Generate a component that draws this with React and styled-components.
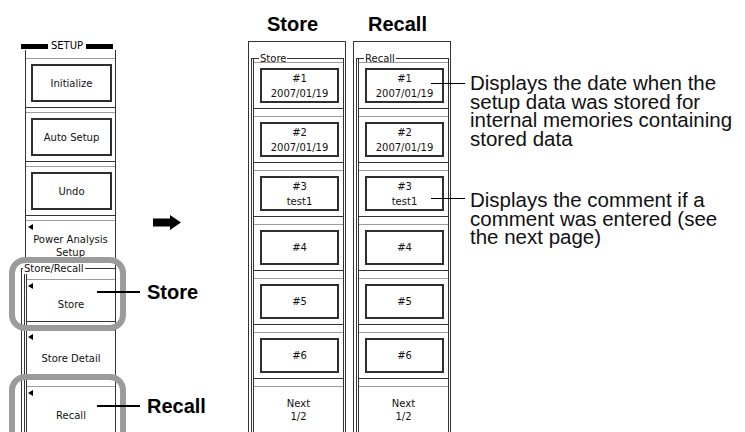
import React from 'react';
import styled, { createGlobalStyle } from 'styled-components';

const UI_FONT = `"DejaVu Sans", "Liberation Sans", sans-serif`;
const DOC_FONT = `"Liberation Sans", Arial, sans-serif`;

const GlobalStyle = createGlobalStyle`
  html, body { margin: 0; padding: 0; background: #fff; }
  body { font-family: ${DOC_FONT}; color: #111; }
`;

const Page = styled.div`
  position: relative;
  width: 745px;
  height: 432px;
  overflow: hidden;
  display: flex;
  align-items: flex-start;
  background: #fff;
`;

/* ---------- SETUP soft-key panel ---------- */
const SetupPanel = styled.div`
  margin: 42px 0 0 20px;
  width: 96px;
  display: flex;
  flex-direction: column;
  font-family: ${UI_FONT};
`;

const PanelHeader = styled.div`
  display: flex;
  align-items: center;
  height: 8px;
  margin: 0 3px 0 1px;
  font-size: 10px;
  line-height: 8px;
  color: #000;
`;

const HeaderBar = styled.span`
  flex: 1;
  height: 5px;
  background: #000;
`;

const HeaderText = styled.span`
  padding: 0 3px;
`;

const SetupBody = styled.div`
  height: 382px;
  box-sizing: border-box;
  border-right: 1px solid #333;
  padding-left: 1px;
  display: flex;
  flex-direction: column;
`;

const KeyList = styled.div`
  display: flex;
  flex-direction: column;
  gap: ${p => p.$gap}px;
  padding-top: ${p => p.$top}px;
  margin-left: ${p => p.$ml}px;
  border-left: ${p => (p.$double ? '3px double #333' : '1px solid #333')};
`;

const Group = styled.div`
  position: relative;
  margin-top: ${p => p.$mt || 0}px;
  border-top: 1px solid #333;
  border-left: 1px solid #333;
  border-right: ${p => (p.$closed ? '1px solid #333' : 'none')};
  padding-left: ${p => p.$pl}px;
  padding-top: ${p => p.$pt}px;
  flex: 1;
`;

const GroupLabel = styled.span`
  position: absolute;
  top: -6px;
  left: ${p => p.$left}px;
  padding: 0 1px;
  background: #fff;
  font-family: ${UI_FONT};
  font-size: 10px;
  line-height: 11px;
  color: #111;
`;

const Key = styled.div`
  position: relative;
  box-sizing: border-box;
  height: ${p => p.$h}px;
  flex-shrink: 0;
  border-top: 1px solid #9c9c9c;
  border-bottom: 1px solid #333;
  padding: ${p => p.$pad || '0'};
  display: flex;
  flex-direction: column;
  background: #fff;
`;

const KeyBox = styled.div`
  flex: 1;
  border: 2px solid #2e2e2e;
  display: flex;
  flex-direction: column;
  align-items: center;
  justify-content: center;
  font-size: 10px;
  line-height: 15px;
  color: #111;
  text-align: center;
`;

const KeyLabel = styled.div`
  flex: 1;
  display: flex;
  flex-direction: column;
  align-items: center;
  justify-content: center;
  padding-top: ${p => p.$drop || 0}px;
  font-size: 10px;
  line-height: 13px;
  color: #111;
  text-align: center;
`;

const Pointer = styled.span`
  position: absolute;
  top: 3px;
  left: ${p => p.$left || 2}px;
  width: 0;
  height: 0;
  border-top: 3px solid transparent;
  border-bottom: 3px solid transparent;
  border-right: 5px solid #000;
`;

/* ---------- arrow ---------- */
const ArrowSlot = styled.div`
  width: 132px;
  box-sizing: border-box;
  padding: 215px 0 0 37px;
  display: flex;
`;

/* ---------- Store / Recall menus ---------- */
const MenuColumn = styled.div`
  width: 98px;
  margin-left: ${p => p.$ml || 0}px;
  display: flex;
  flex-direction: column;
`;

const MenuTitle = styled.div`
  height: 41px;
  box-sizing: border-box;
  padding: 13px 9px 0 0;
  text-align: center;
  font-family: ${DOC_FONT};
  font-weight: bold;
  font-size: 20px;
  line-height: 22px;
  color: #000;
`;

const MenuPanel = styled.div`
  height: 391px;
  box-sizing: border-box;
  border: 1px solid #333;
  border-bottom: none;
  padding: 16px 1px 0 2px;
  display: flex;
  flex-direction: column;
  font-family: ${UI_FONT};
`;

/* ---------- notes ---------- */
const Notes = styled.div`
  flex: 1;
  padding: 74px 0 0 19px;
  display: flex;
  flex-direction: column;
  gap: 43px;
  font-family: ${DOC_FONT};
  font-size: 20.5px;
  line-height: 18.5px;
  color: #111;
`;

const Note = styled.p`
  position: relative;
  margin: 0;
  white-space: nowrap;
  &::before {
    content: '';
    position: absolute;
    left: -39px;
    top: ${p => p.$lead}px;
    width: 34px;
    height: 1px;
    background: #000;
  }
`;

/* ---------- overlays ---------- */
const Ring = styled.div`
  position: absolute;
  left: 9px;
  top: ${p => p.$top}px;
  width: 117px;
  height: ${p => p.$h}px;
  box-sizing: border-box;
  border: 6px solid #9b9b9b;
  border-radius: 16px;
  pointer-events: none;
`;

const Callout = styled.div`
  position: absolute;
  left: 97px;
  top: ${p => p.$top}px;
  height: 24px;
  display: flex;
  align-items: center;
  font-family: ${DOC_FONT};
  font-weight: bold;
  font-size: 20px;
  line-height: 24px;
  color: #000;
`;

const CalloutRule = styled.span`
  width: 43px;
  height: 1.5px;
  margin-right: 7px;
  background: #000;
`;

const memoryKeys = [
  ['#1', '2007/01/19'],
  ['#2', '2007/01/19'],
  ['#3', 'test1'],
  ['#4'],
  ['#5'],
  ['#6'],
];

function MemoryMenu({ title, label, ml }) {
  return (
    <MenuColumn $ml={ml}>
      <MenuTitle>{title}</MenuTitle>
      <MenuPanel>
        <Group $closed $pl={1} $pt={0}>
          <GroupLabel $left={7}>{label}</GroupLabel>
          <KeyList $gap={7} $top={3} $ml={0}>
            {memoryKeys.map(lines => (
              <Key key={lines[0]} $h={47} $pad="5px 4px 5px 6px">
                <KeyBox>
                  {lines.map(l => (
                    <span key={l}>{l}</span>
                  ))}
                </KeyBox>
              </Key>
            ))}
            <Key $h={47}>
              <KeyLabel>
                <span>Next</span>
                <span>1/2</span>
              </KeyLabel>
            </Key>
          </KeyList>
        </Group>
      </MenuPanel>
    </MenuColumn>
  );
}

export default function App() {
  return (
    <>
      <GlobalStyle />
      <Page>
        <SetupPanel>
          <PanelHeader>
            <HeaderBar />
            <HeaderText>SETUP</HeaderText>
            <HeaderBar />
          </PanelHeader>
          <SetupBody>
            <KeyList $gap={4} $top={8} $ml={4}>
              <Key $h={50} $pad="5px 3px 5px 5px">
                <KeyBox>Initialize</KeyBox>
              </Key>
              <Key $h={50} $pad="5px 3px 5px 5px">
                <KeyBox>Auto Setup</KeyBox>
              </Key>
              <Key $h={50} $pad="5px 3px 5px 5px">
                <KeyBox>Undo</KeyBox>
              </Key>
              <Key $h={43}>
                <Pointer />
                <KeyLabel $drop={8}>
                  <span>Power Analysis</span>
                  <span>Setup</span>
                </KeyLabel>
              </Key>
            </KeyList>
            <Group $mt={5} $pl={2} $pt={0}>
              <GroupLabel $left={1}>Store/Recall</GroupLabel>
              <KeyList $double $gap={8} $top={10} $ml={0}>
                <Key $h={43}>
                  <Pointer $left={1} />
                  <KeyLabel $drop={8}>Store</KeyLabel>
                </Key>
                <Key $h={48}>
                  <Pointer $left={1} />
                  <KeyLabel $drop={8}>Store Detail</KeyLabel>
                </Key>
                <Key $h={52}>
                  <Pointer $left={1} />
                  <KeyLabel $drop={6}>Recall</KeyLabel>
                </Key>
              </KeyList>
            </Group>
          </SetupBody>
        </SetupPanel>

        <ArrowSlot>
          <svg width="28" height="15" viewBox="0 0 28 15" aria-hidden="true">
            <path d="M0 3.5 H17 V0 L28 7.5 L17 15 V11.5 H0 Z" fill="#000" />
          </svg>
        </ArrowSlot>

        <MemoryMenu title="Store" label="Store" />
        <MemoryMenu title="Recall" label="Recall" ml={7} />

        <Notes>
          <Note $lead={9}>
            Displays the date when the
            <br />
            setup data was stored for
            <br />
            internal memories containing
            <br />
            stored data
          </Note>
          <Note $lead={7}>
            Displays the comment if a
            <br />
            comment was entered (see
            <br />
            the next page)
          </Note>
        </Notes>

        <Ring $top={257} $h={74} />
        <Ring $top={374} $h={74} />
        <Callout $top={280}>
          <CalloutRule />
          Store
        </Callout>
        <Callout $top={394}>
          <CalloutRule />
          Recall
        </Callout>
      </Page>
    </>
  );
}
